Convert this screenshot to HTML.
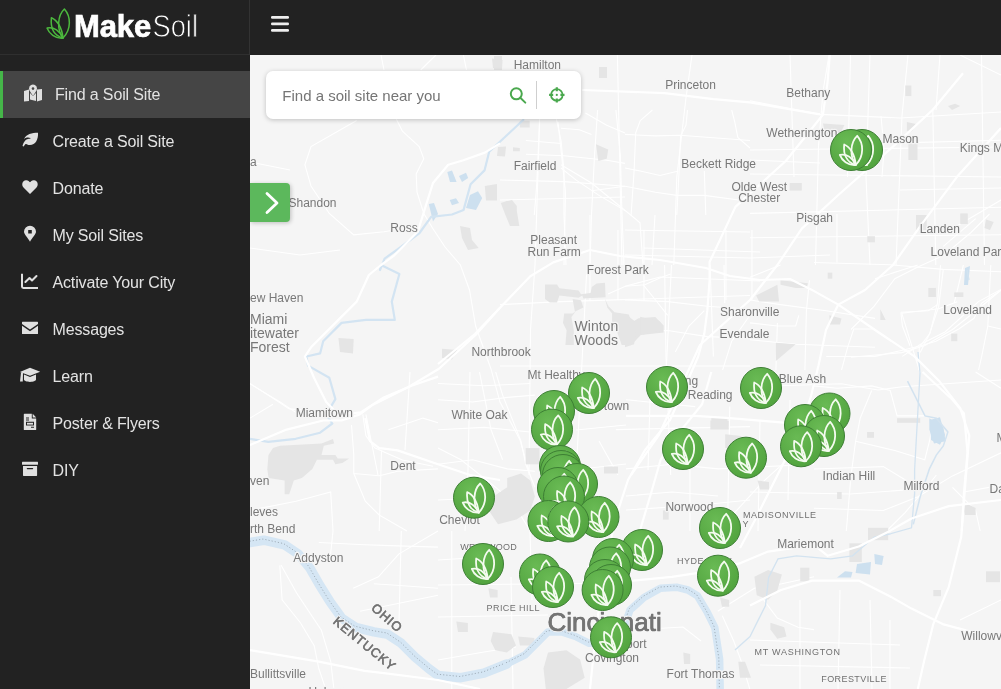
<!DOCTYPE html>
<html><head><meta charset="utf-8">
<style>
html,body{margin:0;padding:0}
body{width:1001px;height:689px;overflow:hidden;position:relative;background:#f5f5f5;font-family:"Liberation Sans",sans-serif}
svg{position:absolute;left:0;top:0;display:block;will-change:transform}
#search{position:absolute;left:266px;top:71px;width:315px;height:48px;background:#fff;border-radius:7px;box-shadow:0 1px 5px rgba(0,0,0,.22)}
#tog{position:absolute;left:250px;top:183px;width:40px;height:39px;background:#5cb85c;border-radius:0 4px 4px 0;box-shadow:1px 1px 4px rgba(0,0,0,.22)}
</style></head><body>
<svg width="1001" height="689" viewBox="0 0 1001 689">
<defs>
<g id="leafg" fill="none" stroke-linejoin="round">
<path d="M4,14.7 C-2.5,6 -1.5,-8 5.4,-14.4 C12,-7 12.5,6 4,14.7 Z"/>
<path d="M4,14.7 C-6,12 -8.5,3 -7.6,-5.7 C-2,-3.5 3,4 4,14.7 Z"/>
<path d="M4,14.7 C-4,15.5 -10,10 -12,4.7 C-5,3 1,8 4,14.7 Z"/>
</g>
<radialGradient id="mg" cx="40%" cy="30%" r="70%">
<stop offset="0" stop-color="#69ba54"/><stop offset="1" stop-color="#52a43f"/>
</radialGradient>
<g id="mk"><circle r="20.5" fill="url(#mg)" stroke="#3d7f34" stroke-width="1"/><use href="#leafg" x="0.8" y="0.2" stroke="#f4fbef" stroke-width="1.8"/></g>
</defs>
<rect x="250" y="55" width="751" height="634" fill="#f5f5f5"/>
<g id="roads"><polyline points="396.3,119.0 402.4,131.2 419.2,146.5 423.8,158.7 416.2,173.9 417.0,192.2 423.8,213.5 433.0,228.8 445.0,247.0 460.4,265.0 469.5,290.0 475.6,326.0 490.9,368.7 500.0,402.0 520.0,440.0 530.0,475.0" fill="none" stroke="#fff" stroke-width="1.1"/>
<polyline points="356.7,120.5 311.0,146.5 304.9,164.8 311.0,186.0 329.3,213.5 353.7,234.9 384.0,231.8 393.3,230.3" fill="none" stroke="#fff" stroke-width="1.1"/>
<polyline points="420.7,70.0 436.0,55.0" fill="none" stroke="#fff" stroke-width="1.1"/>
<polyline points="381.0,55.0 384.0,70.0" fill="none" stroke="#fff" stroke-width="1.1"/>
<polyline points="463.4,55.0 466.5,70.0" fill="none" stroke="#fff" stroke-width="1.1"/>
<polyline points="617.4,55.0 622.0,265.0" fill="none" stroke="#fff" stroke-width="1.1"/>
<polyline points="692.0,55.0 686.0,97.7 676.8,177.0 673.8,265.0" fill="none" stroke="#fff" stroke-width="1.1"/>
<polyline points="539.6,122.0 535.0,265.0 530.5,330.0 529.0,475.0" fill="none" stroke="#fff" stroke-width="1.1"/>
<polyline points="558.0,122.0 565.5,192.0 564.0,265.0" fill="none" stroke="#fff" stroke-width="1.1"/>
<polyline points="561.0,164.8 591.5,183.0 640.0,222.7 643.0,265.0" fill="none" stroke="#fff" stroke-width="1.1"/>
<polyline points="587.0,265.0 582.3,356.5 576.0,475.0" fill="none" stroke="#fff" stroke-width="1.1"/>
<polyline points="664.6,265.0 666.0,356.5 670.7,475.0" fill="none" stroke="#fff" stroke-width="1.1"/>
<polyline points="710.0,265.0 713.4,356.5" fill="none" stroke="#fff" stroke-width="1.1"/>
<polyline points="500.0,304.6 561.0,301.6 750.0,295.5" fill="none" stroke="#fff" stroke-width="1.1"/>
<polyline points="500.0,366.0 750.0,366.0" fill="none" stroke="#fff" stroke-width="1.1"/>
<polyline points="615.9,429.6 750.0,426.6" fill="none" stroke="#fff" stroke-width="1.1"/>
<polyline points="829.0,55.0 823.0,91.5 818.5,146.4 815.5,265.0" fill="none" stroke="#fff" stroke-width="1.1"/>
<polyline points="908.0,55.0 902.0,116.0 896.0,265.0" fill="none" stroke="#fff" stroke-width="1.1"/>
<polyline points="932.8,110.0 935.8,265.0" fill="none" stroke="#fff" stroke-width="1.1"/>
<polyline points="750.0,174.0 1001.0,177.0" fill="none" stroke="#fff" stroke-width="1.1"/>
<polyline points="750.0,100.7 820.0,114.4 900.0,118.0 1001.0,112.0" fill="none" stroke="#fff" stroke-width="1.1"/>
<polyline points="1001.0,289.4 978.4,301.6 945.0,332.0 920.6,344.2 902.3,356.4" fill="none" stroke="#fff" stroke-width="1.1"/>
<polyline points="750.0,386.8 841.4,383.8 878.0,390.0 902.3,386.8 1001.0,380.0" fill="none" stroke="#fff" stroke-width="1.1"/>
<polyline points="362.8,414.4 365.9,435.7 375.0,448.0 402.4,460.0 433.0,466.2" fill="none" stroke="#fff" stroke-width="1.1"/>
<polyline points="365.9,414.4 372.0,445.0 378.0,475.0" fill="none" stroke="#fff" stroke-width="1.1"/>
<polyline points="250.0,383.9 280.5,402.2 298.8,414.4" fill="none" stroke="#fff" stroke-width="1.1"/>
<polyline points="281.0,565.0 296.6,593.0 321.4,630.3 330.7,661.3 333.9,689.0" fill="none" stroke="#fff" stroke-width="1.1"/>
<polyline points="883.6,534.0 905.3,512.3 924.0,490.5 936.4,475.0" fill="none" stroke="#fff" stroke-width="1.1"/>
<polyline points="750.0,492.0 850.0,494.0 905.0,490.0" fill="none" stroke="#fff" stroke-width="1.1"/>
<polyline points="250.0,162.0 290.0,170.0" fill="none" stroke="#fff" stroke-width="1.1"/>
<polyline points="250.0,248.0 300.0,255.0 340.0,250.0" fill="none" stroke="#fff" stroke-width="1.1"/>
<polyline points="851.0,329.5 874.0,306.4 894.8,278.7 917.9,267.1 943.3,255.6 971.0,232.5 989.5,214.0" fill="none" stroke="#fff" stroke-width="1.1"/>
<polyline points="814.0,262.5 890.2,264.8 943.3,269.4 1001.0,271.7" fill="none" stroke="#fff" stroke-width="1.1"/>
<polyline points="901.8,313.3 911.0,343.3 920.2,373.0" fill="none" stroke="#fff" stroke-width="1.1"/>
<polyline points="901.8,313.3 938.7,308.7 957.2,301.8" fill="none" stroke="#fff" stroke-width="1.1"/>
<polyline points="943.3,269.4 938.7,306.4 929.5,334.1 920.2,352.6" fill="none" stroke="#fff" stroke-width="1.1"/>
<polyline points="1001.0,290.2 975.7,311.0 952.6,329.5 924.9,345.6 901.8,352.6 851.0,357.2" fill="none" stroke="#fff" stroke-width="1.1"/>
<polyline points="943.3,246.3 975.7,218.6" fill="none" stroke="#fff" stroke-width="1.1"/>
<polyline points="837.0,214.0 837.0,262.5" fill="none" stroke="#fff" stroke-width="1.1"/>
<polyline points="608.0,294.0 626.0,286.0 660.0,277.0 760.0,281.0" fill="none" stroke="#fff" stroke-width="1.1"/>
<polyline points="644.0,248.0 760.0,252.0" fill="none" stroke="#fff" stroke-width="1.1"/>
<polyline points="590.0,215.0 590.0,300.0" fill="none" stroke="#fff" stroke-width="1.1"/>
<polyline points="618.0,230.0 618.0,300.0" fill="none" stroke="#fff" stroke-width="1.1"/>
<polyline points="644.0,230.0 644.0,300.0" fill="none" stroke="#fff" stroke-width="1.1"/>
<polyline points="726.0,230.0 726.0,300.0" fill="none" stroke="#fff" stroke-width="1.1"/>
<polyline points="752.0,230.0 752.0,300.0" fill="none" stroke="#fff" stroke-width="1.1"/>
<polyline points="881.0,116.0 884.0,150.0 882.0,177.0" fill="none" stroke="#fff" stroke-width="1.1"/>
<polyline points="750.0,160.0 820.0,163.0" fill="none" stroke="#fff" stroke-width="1.1"/>
<polyline points="900.0,190.0 1001.0,188.0" fill="none" stroke="#fff" stroke-width="1.1"/>
<polyline points="950.0,230.0 1001.0,200.0" fill="none" stroke="#fff" stroke-width="1.1"/>
<polyline points="960.0,55.0 1001.0,75.0" fill="none" stroke="#fff" stroke-width="1.1"/>
<polyline points="790.0,55.0 794.0,177.0" fill="none" stroke="#fff" stroke-width="1.1"/>
<polyline points="750.0,258.0 830.0,255.0" fill="none" stroke="#fff" stroke-width="1.1"/>
<polyline points="866.0,177.0 870.0,265.0" fill="none" stroke="#fff" stroke-width="1.1"/>
<polyline points="495.7,372.0 502.6,395.1 511.8,418.1 521.0,441.2 525.7,464.3 534.9,487.3" fill="none" stroke="#fff" stroke-width="1.1"/>
<polyline points="438.0,399.7 472.6,402.0 507.2,397.4 534.9,395.1" fill="none" stroke="#fff" stroke-width="1.1"/>
<polyline points="438.0,429.7 484.1,427.4 530.3,432.0" fill="none" stroke="#fff" stroke-width="1.1"/>
<polyline points="438.0,464.3 472.6,459.7 507.2,468.9 534.9,471.2" fill="none" stroke="#fff" stroke-width="1.1"/>
<polyline points="438.0,448.1 461.0,459.7 495.7,487.3 511.8,501.2 530.3,531.0" fill="none" stroke="#fff" stroke-width="1.1"/>
<polyline points="479.5,372.0 484.1,395.1 491.0,429.7 502.6,459.7" fill="none" stroke="#fff" stroke-width="1.1"/>
<polyline points="438.0,383.5 484.1,385.8 530.3,383.5" fill="none" stroke="#fff" stroke-width="1.1"/>
<polyline points="576.0,430.0 626.0,425.0" fill="none" stroke="#fff" stroke-width="1.1"/>
<polyline points="581.0,469.0 626.0,464.0" fill="none" stroke="#fff" stroke-width="1.1"/>
<polyline points="599.0,441.0 618.0,475.0" fill="none" stroke="#fff" stroke-width="1.1"/>
<polyline points="500.0,200.0 625.0,197.0" fill="none" stroke="#fff" stroke-width="1.1"/>
<polyline points="564.0,215.0 566.0,265.0" fill="none" stroke="#fff" stroke-width="1.1"/>
<polyline points="591.5,215.0 590.0,265.0" fill="none" stroke="#fff" stroke-width="1.1"/>
<polyline points="622.0,215.0 624.0,265.0" fill="none" stroke="#fff" stroke-width="1.1"/>
<polyline points="625.0,230.0 750.0,232.0" fill="none" stroke="#fff" stroke-width="1.1"/>
<polyline points="625.0,255.0 750.0,258.0" fill="none" stroke="#fff" stroke-width="1.1"/>
<polyline points="655.0,215.0 652.0,265.0" fill="none" stroke="#fff" stroke-width="1.1"/>
<polyline points="750.0,150.0 1001.0,147.0" fill="none" stroke="#fff" stroke-width="1.1"/>
<polyline points="870.0,55.0 866.0,177.0" fill="none" stroke="#fff" stroke-width="1.1"/>
<polyline points="940.0,55.0 936.0,110.0" fill="none" stroke="#fff" stroke-width="1.1"/>
<polyline points="438.0,500.0 480.0,498.0 520.0,505.0" fill="none" stroke="#fff" stroke-width="1.1"/>
<polyline points="438.0,560.0 470.0,558.0 500.0,562.0" fill="none" stroke="#fff" stroke-width="1.1"/>
<polyline points="470.0,372.0 468.0,470.0 465.0,531.0" fill="none" stroke="#fff" stroke-width="1.1"/>
<polyline points="410.0,372.0 405.0,450.0" fill="none" stroke="#fff" stroke-width="1.1"/>
<polyline points="626.0,510.0 700.0,505.0 750.0,500.0" fill="none" stroke="#fff" stroke-width="1.1"/>
<polyline points="650.0,400.0 648.0,470.0" fill="none" stroke="#fff" stroke-width="1.1"/>
<polyline points="690.0,440.0 690.0,531.0" fill="none" stroke="#fff" stroke-width="1.1"/>
<polyline points="760.0,420.0 758.0,531.0" fill="none" stroke="#fff" stroke-width="1.1"/>
<polyline points="790.0,400.0 788.0,500.0" fill="none" stroke="#fff" stroke-width="1.1"/>
<polyline points="800.0,600.0 800.0,689.0" fill="none" stroke="#fff" stroke-width="1.1"/>
<polyline points="840.0,590.0 838.0,689.0" fill="none" stroke="#fff" stroke-width="1.1"/>
<polyline points="870.0,600.0 872.0,689.0" fill="none" stroke="#fff" stroke-width="1.1"/>
<polyline points="750.0,640.0 900.0,645.0" fill="none" stroke="#fff" stroke-width="1.1"/>
<polyline points="760.0,665.0 910.0,668.0" fill="none" stroke="#fff" stroke-width="1.1"/>
<polyline points="890.0,620.0 890.0,689.0" fill="none" stroke="#fff" stroke-width="1.1"/>
<polyline points="1001.0,600.0 960.0,620.0" fill="none" stroke="#fff" stroke-width="1.1"/>
<polyline points="250.0,383.5 275.4,399.7 289.2,408.9 351.5,413.5" fill="none" stroke="#fff" stroke-width="1.1"/>
<polyline points="250.0,418.1 273.0,404.3" fill="none" stroke="#fff" stroke-width="1.1"/>
<polyline points="351.5,425.0 353.8,455.0 353.8,473.5 379.2,475.8 397.6,471.2 438.0,468.9" fill="none" stroke="#fff" stroke-width="1.1"/>
<polyline points="381.5,450.4 379.2,531.0" fill="none" stroke="#fff" stroke-width="1.1"/>
<polyline points="353.8,473.5 365.3,501.2 379.2,515.0 406.9,531.0" fill="none" stroke="#fff" stroke-width="1.1"/>
<polyline points="388.4,429.7 423.0,418.1 438.0,422.7" fill="none" stroke="#fff" stroke-width="1.1"/>
<polyline points="250.0,510.4 296.1,501.2 330.7,492.0 333.0,531.0 330.0,560.0" fill="none" stroke="#fff" stroke-width="1.1"/>
<polyline points="279.8,565.4 282.1,599.8 300.4,622.7 314.2,645.6 318.8,668.5 325.7,689.0" fill="none" stroke="#fff" stroke-width="1.1"/>
<polyline points="353.2,588.3 378.4,576.8 399.0,553.9 438.0,531.0" fill="none" stroke="#fff" stroke-width="1.1"/>
<polyline points="318.8,542.5 364.6,544.8 438.0,547.1" fill="none" stroke="#fff" stroke-width="1.1"/>
<polyline points="401.3,531.0 399.0,622.7" fill="none" stroke="#fff" stroke-width="1.1"/>
<polyline points="360.0,611.2 438.0,595.2" fill="none" stroke="#fff" stroke-width="1.1"/>
<polyline points="373.8,583.7 438.0,588.3" fill="none" stroke="#fff" stroke-width="1.1"/>
<polyline points="438.0,585.0 626.0,583.0" fill="none" stroke="#fff" stroke-width="1.1"/>
<polyline points="438.0,617.0 548.0,615.0" fill="none" stroke="#fff" stroke-width="1.1"/>
<polyline points="451.8,531.0 451.8,689.0" fill="none" stroke="#fff" stroke-width="1.1"/>
<polyline points="511.0,577.0 513.0,689.0" fill="none" stroke="#fff" stroke-width="1.1"/>
<polyline points="530.0,531.0 532.0,600.0" fill="none" stroke="#fff" stroke-width="1.1"/>
<polyline points="438.0,660.0 484.0,652.0 516.0,647.0" fill="none" stroke="#fff" stroke-width="1.1"/>
<polyline points="717.7,611.2 736.0,599.8 754.4,588.3 781.9,583.7 814.0,576.8" fill="none" stroke="#fff" stroke-width="1.1"/>
<polyline points="722.3,615.8 733.7,641.0 740.6,659.4 749.8,689.0" fill="none" stroke="#fff" stroke-width="1.1"/>
<polyline points="763.6,599.8 777.3,618.1 798.0,627.3 814.0,629.6" fill="none" stroke="#fff" stroke-width="1.1"/>
<polyline points="649.0,629.0 683.0,627.0 701.0,641.0" fill="none" stroke="#fff" stroke-width="1.1"/>
<polyline points="814.0,385.9 837.1,388.2 871.7,385.9 890.2,390.5 897.1,415.9 924.8,415.9" fill="none" stroke="#fff" stroke-width="1.1"/>
<polyline points="871.7,390.5 860.2,418.2 855.6,441.3 851.0,475.9 846.3,531.0" fill="none" stroke="#fff" stroke-width="1.1"/>
<polyline points="855.6,441.3 894.8,450.5 924.8,459.7 929.4,441.3 934.0,418.2" fill="none" stroke="#fff" stroke-width="1.1"/>
<polyline points="814.0,508.2 883.3,510.5 917.9,496.7 952.5,475.9 1001.0,452.8" fill="none" stroke="#fff" stroke-width="1.1"/>
<polyline points="952.5,487.4 975.6,510.5 980.2,531.0" fill="none" stroke="#fff" stroke-width="1.1"/>
<polyline points="964.0,492.0 1001.0,485.1" fill="none" stroke="#fff" stroke-width="1.1"/>
<polyline points="814.0,469.0 883.3,466.6 906.3,480.5" fill="none" stroke="#fff" stroke-width="1.1"/>
<polyline points="975.6,372.0 1001.0,388.2" fill="none" stroke="#fff" stroke-width="1.1"/>
<polyline points="814.0,436.6 787.5,459.7 762.1,482.7 736.7,510.4 718.3,531.0" fill="none" stroke="#fff" stroke-width="1.1"/>
<polyline points="626.0,468.9 672.1,464.3 718.3,468.9 814.0,464.3" fill="none" stroke="#fff" stroke-width="1.1"/>
<polyline points="729.8,406.6 727.5,531.0" fill="none" stroke="#fff" stroke-width="1.1"/>
<polyline points="626.0,399.7 695.2,406.6" fill="none" stroke="#fff" stroke-width="1.1"/>
<polyline points="626.0,496.0 672.0,492.0 718.0,496.0" fill="none" stroke="#fff" stroke-width="1.1"/>
<polyline points="539.6,119.1 538.1,155.7 536.6,186.2 534.3,215.0" fill="none" stroke="#fff" stroke-width="1.1"/>
<polyline points="556.4,119.1 561.0,140.5 564.0,171.0 564.0,215.0" fill="none" stroke="#fff" stroke-width="1.1"/>
<polyline points="597.6,110.0 594.5,155.7 591.5,215.0" fill="none" stroke="#fff" stroke-width="1.1"/>
<polyline points="615.9,110.0 620.4,155.7 622.0,215.0" fill="none" stroke="#fff" stroke-width="1.1"/>
<polyline points="561.0,168.0 576.2,180.1 599.0,195.4 625.0,210.6" fill="none" stroke="#fff" stroke-width="1.1"/>
<polyline points="525.9,154.2 564.0,155.7 606.7,160.3 625.0,163.4" fill="none" stroke="#fff" stroke-width="1.1"/>
<polyline points="525.9,140.5 561.0,143.5" fill="none" stroke="#fff" stroke-width="1.1"/>
<polyline points="585.4,113.0 606.7,125.2 625.0,132.9" fill="none" stroke="#fff" stroke-width="1.1"/>
<polyline points="500.0,180.0 564.0,181.6 625.0,186.2" fill="none" stroke="#fff" stroke-width="1.1"/>
<polyline points="561.0,128.3 579.3,129.8 591.5,134.4" fill="none" stroke="#fff" stroke-width="1.1"/>
<polyline points="591.5,190.8 625.0,186.2" fill="none" stroke="#fff" stroke-width="1.1"/>
<polyline points="687.5,110.0 686.0,125.2 680.6,135.9 679.1,171.0 676.8,215.0" fill="none" stroke="#fff" stroke-width="1.1"/>
<polyline points="652.4,110.0 640.2,120.7 635.7,132.9 634.1,171.0 631.1,215.0" fill="none" stroke="#fff" stroke-width="1.1"/>
<polyline points="625.0,134.4 655.5,135.9 679.9,135.2 750.0,140.5" fill="none" stroke="#fff" stroke-width="1.1"/>
<polyline points="625.0,168.0 640.2,171.0 660.0,175.5 678.4,171.0" fill="none" stroke="#fff" stroke-width="1.1"/>
<polyline points="625.0,186.2 655.5,192.3 676.8,195.4 704.3,195.4 750.0,201.5" fill="none" stroke="#fff" stroke-width="1.1"/>
<polyline points="731.7,110.0 734.8,122.2 737.8,137.4 750.0,148.0" fill="none" stroke="#fff" stroke-width="1.1"/>
<polyline points="704.3,171.0 705.8,215.0" fill="none" stroke="#fff" stroke-width="1.1"/>
<polyline points="850.5,55.0 847.5,177.0" fill="none" stroke="#fff" stroke-width="1.1"/>
<polyline points="750.0,213.4 1001.0,207.3" fill="none" stroke="#fff" stroke-width="1.1"/>
<polyline points="881.0,143.3 1001.0,140.3" fill="none" stroke="#fff" stroke-width="1.1"/>
<polyline points="981.5,55.0 984.5,265.0" fill="none" stroke="#fff" stroke-width="1.1"/>
<polyline points="750.0,237.8 1001.0,234.7" fill="none" stroke="#fff" stroke-width="1.1"/>
<polyline points="671.5,265.0 669.2,310.7 666.2,370.0" fill="none" stroke="#fff" stroke-width="1.1"/>
<polyline points="643.3,284.8 655.5,300.0 667.7,315.3" fill="none" stroke="#fff" stroke-width="1.1"/>
<polyline points="625.0,300.0 667.7,301.6 707.3,306.2 750.0,309.2" fill="none" stroke="#fff" stroke-width="1.1"/>
<polyline points="625.0,332.0 667.7,330.5 707.3,336.6 750.0,338.2" fill="none" stroke="#fff" stroke-width="1.1"/>
<polyline points="675.3,351.9 689.0,326.0 704.3,310.7" fill="none" stroke="#fff" stroke-width="1.1"/>
<polyline points="724.0,265.0 724.8,303.0" fill="none" stroke="#fff" stroke-width="1.1"/>
<polyline points="625.0,286.3 644.8,284.8 661.6,277.2 670.7,274.1" fill="none" stroke="#fff" stroke-width="1.1"/>
<polyline points="750.0,315.3 731.7,341.2 722.6,370.0" fill="none" stroke="#fff" stroke-width="1.1"/>
<polyline points="809.5,280.2 806.4,310.7 804.9,370.0" fill="none" stroke="#fff" stroke-width="1.1"/>
<polyline points="750.0,300.0 780.5,304.6 826.2,310.7 875.0,318.4" fill="none" stroke="#fff" stroke-width="1.1"/>
<polyline points="798.8,315.3 795.7,326.0 777.4,326.0 750.0,322.9" fill="none" stroke="#fff" stroke-width="1.1"/>
<polyline points="750.0,339.7 795.7,344.3 875.0,347.3" fill="none" stroke="#fff" stroke-width="1.1"/>
<polyline points="875.0,329.0 853.7,329.0 847.6,347.3 841.5,370.0" fill="none" stroke="#fff" stroke-width="1.1"/>
<polyline points="777.4,322.9 775.9,370.0" fill="none" stroke="#fff" stroke-width="1.1"/>
<polyline points="875.0,356.5 826.2,356.5" fill="none" stroke="#fff" stroke-width="1.1"/>
<polyline points="750.0,277.2 780.5,265.0" fill="none" stroke="#fff" stroke-width="1.1"/>
<polyline points="1000.0,290.9 981.7,303.1 974.0,318.3 958.8,329.0 936.0,341.2 920.7,345.8 902.4,350.3 875.0,356.4" fill="none" stroke="#fff" stroke-width="1.1"/>
<polyline points="940.5,265.0 937.5,303.1 929.9,333.6 919.2,347.3 919.2,370.0" fill="none" stroke="#fff" stroke-width="1.1"/>
<polyline points="963.4,265.0 954.2,303.1" fill="none" stroke="#fff" stroke-width="1.1"/>
<polyline points="900.9,312.2 928.3,310.7 937.5,304.6" fill="none" stroke="#fff" stroke-width="1.1"/>
<polyline points="900.9,312.2 902.4,326.0 910.0,345.8" fill="none" stroke="#fff" stroke-width="1.1"/>
<polyline points="875.0,278.7 917.7,265.0" fill="none" stroke="#fff" stroke-width="1.1"/>
<polyline points="987.8,326.0 1001.0,329.0" fill="none" stroke="#fff" stroke-width="1.1"/>
<polyline points="990.8,265.0 987.8,326.0 981.7,356.4 978.6,370.0" fill="none" stroke="#fff" stroke-width="1.1"/>
<polygon points="460.0,226.0 470.0,228.0 472.0,240.0 478.7,248.0 468.0,250.0 462.0,238.0" fill="#e5e5e5"/>
<polygon points="484.8,186.0 497.0,184.0 497.0,200.6 486.0,200.6" fill="#e5e5e5"/>
<polygon points="498.0,147.0 506.0,146.5 505.0,156.5 497.0,156.0" fill="#e5e5e5"/>
<polygon points="500.8,203.0 507.0,201.0 513.0,205.0 517.0,212.0 519.3,226.1 510.0,226.0 505.0,214.0" fill="#e5e5e5"/>
<polygon points="494.0,58.0 502.0,58.0 502.0,68.7 494.0,68.7" fill="#e5e5e5"/>
<polygon points="492.0,58.5 502.6,60.0 502.0,68.8 493.0,68.0" fill="#e5e5e5"/>
<polygon points="338.4,338.0 353.7,339.0 353.0,353.4 340.0,352.0" fill="#e5e5e5"/>
<polygon points="442.0,348.8 457.3,350.0 452.0,359.5 442.0,358.0" fill="#e5e5e5"/>
<polygon points="710.4,420.5 728.7,421.0 728.7,429.6 710.4,429.6" fill="#e5e5e5"/>
<polygon points="868.0,527.8 888.2,527.8 888.2,540.2 868.0,540.2" fill="#e5e5e5"/>
<polygon points="849.4,543.3 861.8,543.3 861.8,562.0 849.4,562.0" fill="#e5e5e5"/>
<polygon points="986.0,571.3 1000.0,571.3 1000.0,582.2 986.0,582.2" fill="#e5e5e5"/>
<polygon points="933.3,590.0 941.0,590.0 941.0,596.2 933.3,596.2" fill="#e5e5e5"/>
<polygon points="905.3,85.5 911.4,85.5 911.4,96.1 905.3,96.1" fill="#e5e5e5"/>
<polygon points="906.9,122.0 916.0,124.0 912.0,131.2 906.9,131.2" fill="#e5e5e5"/>
<polygon points="908.4,143.3 917.5,143.3 917.5,160.0 908.4,160.0" fill="#e5e5e5"/>
<polygon points="948.0,106.0 955.0,103.7 960.2,106.0 952.0,110.0" fill="#e5e5e5"/>
<polygon points="789.6,183.0 801.8,183.0 801.8,190.6 789.6,190.6" fill="#e5e5e5"/>
<polygon points="867.3,236.2 874.9,236.2 874.9,242.3 867.3,242.3" fill="#e5e5e5"/>
<polygon points="916.0,215.0 926.7,215.0 926.7,230.1 916.0,230.1" fill="#e5e5e5"/>
<polygon points="960.2,213.4 967.8,213.4 967.8,224.0 960.2,224.0" fill="#e5e5e5"/>
<polygon points="986.0,219.5 993.7,222.0 990.0,230.1 984.5,228.0" fill="#e5e5e5"/>
<polygon points="823.0,123.5 844.4,125.0 840.0,134.2 825.0,134.2" fill="#e5e5e5"/>
<polygon points="494.0,56.0 502.0,56.0 502.0,70.0 494.0,70.0" fill="#e5e5e5"/>
<polygon points="599.0,67.0 607.0,67.0 607.0,78.0 599.0,78.0" fill="#e5e5e5"/>
<polygon points="507.2,478.1 521.0,473.5 530.3,480.4 534.9,496.6 530.3,510.4 516.4,519.6 498.0,524.3 488.8,510.4 493.4,496.6 507.2,487.3" fill="#e5e5e5"/>
<polygon points="525.7,448.1 539.5,448.1 539.5,464.3 525.7,464.3" fill="#e5e5e5"/>
<polygon points="604.0,466.6 618.0,466.6 618.0,473.5 604.0,473.5" fill="#e5e5e5"/>
<polygon points="273.0,448.1 280.0,445.8 321.5,443.5 333.0,438.9 334.2,443.5 323.8,445.8 321.5,455.0 335.4,455.0 337.7,458.5 349.2,458.5 342.3,463.1 335.4,464.3 333.0,459.7 316.9,459.7 312.3,468.9 301.9,478.1 293.8,480.4 289.2,494.3 284.6,494.3 284.6,480.4 268.5,478.1 267.3,468.9 268.5,455.0" fill="#e5e5e5"/>
<polygon points="493.0,631.9 511.4,634.2 516.0,645.6 506.8,652.5 495.3,650.2 490.7,641.0" fill="#e5e5e5"/>
<polygon points="518.2,636.5 534.3,638.0 534.3,645.6 520.0,645.6" fill="#e5e5e5"/>
<polygon points="548.0,652.5 566.4,650.2 580.1,659.4 584.7,677.7 566.4,689.0 545.8,689.0 543.5,668.6" fill="#e5e5e5"/>
<polygon points="456.3,621.6 467.8,623.0 467.8,631.9 458.0,631.9" fill="#e5e5e5"/>
<polygon points="488.4,588.3 497.6,590.0 497.6,597.5 490.0,597.5" fill="#e5e5e5"/>
<polygon points="754.4,576.8 768.1,570.0 781.9,574.6 777.3,590.6 768.1,599.8 756.7,595.2" fill="#e5e5e5"/>
<polygon points="800.2,567.7 809.4,567.7 809.4,581.4 800.2,581.4" fill="#e5e5e5"/>
<polygon points="770.4,622.7 784.2,627.3 786.5,636.5 777.3,638.8 770.4,629.6" fill="#e5e5e5"/>
<polygon points="738.3,661.7 745.0,661.7 751.0,677.7 740.0,677.7" fill="#e5e5e5"/>
<polygon points="720.0,597.5 729.2,600.0 729.2,606.7 722.0,606.7" fill="#e5e5e5"/>
<polygon points="683.3,652.5 690.2,654.0 690.2,664.0 684.0,664.0" fill="#e5e5e5"/>
<polygon points="897.1,418.2 920.2,418.2 920.2,422.8 897.1,422.8" fill="#e5e5e5"/>
<polygon points="867.1,432.0 874.0,432.0 874.0,437.8 867.1,437.8" fill="#e5e5e5"/>
<polygon points="837.1,492.0 841.7,492.0 841.7,499.0 837.1,499.0" fill="#e5e5e5"/>
<polygon points="961.7,501.3 975.6,508.0 975.6,515.1 965.0,515.1" fill="#e5e5e5"/>
<polygon points="711.3,418.1 727.5,418.1 727.5,427.4 711.3,427.4" fill="#e5e5e5"/>
<polygon points="725.2,434.3 741.3,436.0 741.3,448.1 725.2,448.1" fill="#e5e5e5"/>
<polygon points="757.5,480.4 769.0,482.0 769.0,489.6 760.0,489.6" fill="#e5e5e5"/>
<polygon points="662.9,510.4 668.7,510.4 668.7,519.6 662.9,519.6" fill="#e5e5e5"/>
<polygon points="596.0,144.3 608.2,149.6 606.7,158.8 598.3,161.0" fill="#e5e5e5"/>
<polygon points="513.0,147.3 519.8,148.0 519.8,151.2 513.0,151.2" fill="#e5e5e5"/>
<polygon points="519.8,120.7 529.7,120.7 529.7,127.5 519.8,127.5" fill="#e5e5e5"/>
<polygon points="506.0,201.5 512.0,200.0 516.8,206.0 516.8,215.0 506.0,215.0" fill="#e5e5e5"/>
<polygon points="545.0,284.6 557.0,284.6 559.4,288.2 578.6,290.6 581.0,294.2 590.6,293.0 591.8,287.0 596.6,283.4 605.0,282.8 605.6,297.2 583.4,298.4 582.2,295.4 578.6,297.8 559.4,295.4 557.0,302.6 549.8,302.6 545.0,299.0" fill="#e5e5e5"/>
<polygon points="572.6,299.0 581.0,300.2 583.4,307.4 576.2,311.0 572.6,313.4 564.2,313.4 563.0,323.0 566.6,330.2 565.4,345.0 573.8,345.0 573.8,330.2 571.4,317.0 575.0,312.2" fill="#e5e5e5"/>
<polygon points="605.0,299.0 608.5,306.2 614.5,312.2 628.9,314.6 631.3,323.0 638.5,318.2 655.3,317.0 663.7,325.4 663.7,332.6 640.9,335.0 631.3,345.0 621.7,345.0 616.9,331.4 612.1,323.0 612.1,313.4 607.3,307.4" fill="#e5e5e5"/>
<polygon points="640.2,316.8 660.0,321.4 663.0,330.5 640.2,335.1" fill="#e5e5e5"/>
<polygon points="625.0,313.8 637.2,322.9 634.1,344.3 625.0,347.3" fill="#e5e5e5"/>
<polygon points="756.1,295.5 777.4,284.8 779.0,301.6 759.1,301.6" fill="#e5e5e5"/>
<polygon points="780.5,280.2 807.9,283.3 806.4,287.9 795.7,287.9 780.5,284.8" fill="#e5e5e5"/>
<polygon points="829.3,315.3 841.5,318.4 840.0,324.5 830.0,324.5" fill="#e5e5e5"/>
<polygon points="775.9,342.7 795.7,344.3 775.9,361.0" fill="#e5e5e5"/>
<polygon points="827.7,272.6 832.3,272.6 832.3,278.7 827.7,278.7" fill="#e5e5e5"/>
<polygon points="928.3,287.9 935.9,287.9 935.9,297.0 928.3,297.0" fill="#e5e5e5"/>
<polygon points="954.2,292.4 963.4,292.4 963.4,297.0 954.2,297.0" fill="#e5e5e5"/>
<polygon points="880.3,309.2 885.7,319.9 880.3,319.9" fill="#e5e5e5"/>
<polygon points="951.2,333.6 957.3,333.6 957.3,341.2 951.2,341.2" fill="#e5e5e5"/>
<polygon points="965.0,268.0 970.0,266.0 968.0,285.0 964.0,285.0" fill="#cde0ef"/>
<polygon points="874.3,554.0 883.6,556.0 882.0,565.0 875.0,564.0" fill="#cde0ef"/>
<polygon points="857.0,564.0 871.0,562.0 870.0,574.4 855.6,573.0" fill="#cde0ef"/>
<polygon points="837.0,577.5 845.0,571.3 852.5,572.0 851.0,577.5" fill="#cde0ef"/>
<polygon points="929.7,420.0 940.0,417.3 945.0,435.0 940.0,444.7 931.0,440.0" fill="#cde0ef"/>
<polygon points="447.3,172.0 452.0,170.4 456.6,182.0 450.0,182.0" fill="#cde0ef"/>
<polygon points="459.0,176.0 466.0,172.7 468.2,178.0 462.0,182.0" fill="#cde0ef"/>
<polygon points="470.0,195.0 478.0,191.3 482.2,198.0 476.0,209.9 466.0,208.0" fill="#cde0ef"/>
<polygon points="428.8,204.0 434.0,202.9 438.0,214.0 433.0,221.5" fill="#cde0ef"/>
<polygon points="449.7,200.0 456.0,198.2 459.0,203.0 452.0,205.2" fill="#cde0ef"/>
<polygon points="929.4,418.2 943.3,427.4 945.6,441.3 934.0,443.6 929.4,429.7" fill="#cde0ef"/>
<polyline points="524.0,119.3 489.2,151.8 484.5,170.4 470.6,184.3 463.6,209.9 452.0,214.5 431.1,216.8 419.5,233.0 400.9,247.0 384.6,258.6 380.0,270.0 381.0,265.0 399.4,274.0 391.8,301.6 394.8,319.9 365.9,319.9 341.5,322.9 323.2,341.2 320.1,353.4 306.4,356.5 308.0,365.6 329.3,377.8 335.4,399.1 326.2,414.4 332.3,423.5 320.1,432.7 295.7,438.8 268.3,441.8 250.0,438.8" fill="none" stroke="#d3e4f2" stroke-width="2.2" stroke-linejoin="round"/>
<polyline points="967.0,270.0 969.0,280.0" fill="none" stroke="#d3e3f0" stroke-width="1.3"/>
<polyline points="918.0,352.0 920.0,373.0 914.6,470.0 914.6,493.6 911.5,527.8 889.8,534.0 874.3,537.1 852.5,555.8 830.8,558.9 796.6,555.8 778.0,558.9 768.6,577.5 765.5,605.5 756.2,624.1 750.0,636.5 735.0,650.0" fill="none" stroke="#d3e3f0" stroke-width="1.3"/>
<polyline points="907.5,381.2 925.0,415.9 936.3,418.2 947.9,432.0 943.3,445.9 936.3,455.1 929.4,468.9 920.2,496.7 913.3,524.4" fill="none" stroke="#d3e3f0" stroke-width="1.5"/>
<polyline points="244.0,543.0 250.0,542.5 263.8,540.2 284.4,544.8 298.1,553.9 309.6,567.7 318.8,583.7 330.2,602.1 341.7,618.1 355.5,627.3 373.8,631.9 387.6,634.2 401.3,643.3 415.1,657.1 428.8,668.6 438.0,675.4 460.9,677.7 483.9,673.1 506.8,664.0" fill="none" stroke="#d5e6f4" stroke-width="9.5" stroke-linejoin="round" stroke-linecap="round"/>
<polyline points="244.0,543.0 250.0,542.5 263.8,540.2 284.4,544.8 298.1,553.9 309.6,567.7 318.8,583.7 330.2,602.1 341.7,618.1 355.5,627.3 373.8,631.9 387.6,634.2 401.3,643.3 415.1,657.1 428.8,668.6 438.0,675.4 460.9,677.7 483.9,673.1 506.8,664.0" fill="none" stroke="#7d8a94" stroke-width="0.6" stroke-dasharray="1.2,2" transform="translate(-0.8,-1.2)"/>
<polyline points="506.8,664.0 525.1,654.8 536.6,643.3 548.0,631.9 561.8,631.9 575.5,636.5 589.3,643.3 610.0,640.0 621.0,636.0 630.0,610.0 644.0,597.5 660.4,588.3 676.4,587.2 688.0,590.0 697.4,595.8 706.9,611.6 714.8,627.5 717.2,643.3 719.6,659.1 720.3,695.0" fill="none" stroke="#d5e6f4" stroke-width="7.5" stroke-linejoin="round" stroke-linecap="round"/>
<polyline points="506.8,664.0 525.1,654.8 536.6,643.3 548.0,631.9 561.8,631.9 575.5,636.5 589.3,643.3 610.0,640.0 621.0,636.0 630.0,610.0 644.0,597.5 660.4,588.3 676.4,587.2 688.0,590.0 697.4,595.8 706.9,611.6 714.8,627.5 717.2,643.3 719.6,659.1 720.3,695.0" fill="none" stroke="#7d8a94" stroke-width="0.6" stroke-dasharray="1.2,2" transform="translate(-0.8,-1.2)"/>
<polyline points="500.0,143.4 484.8,152.6 463.4,160.2 448.2,164.8 433.0,183.0 425.3,207.4 417.7,231.8 393.3,256.2 381.0,265.0 368.9,275.0 356.7,301.6 338.4,319.9 311.0,347.3 304.9,356.5 314.0,377.8 326.2,402.0 338.4,414.4" fill="none" stroke="#fff" stroke-width="2.2" stroke-linejoin="round"/>
<polyline points="500.0,307.7 475.6,335.0 439.0,368.7 408.5,387.0 372.0,405.3 359.8,414.4 341.5,420.5 323.2,420.5 286.6,429.6 250.0,444.9" fill="none" stroke="#fff" stroke-width="2.2" stroke-linejoin="round"/>
<polyline points="438.0,364.0 474.9,334.0 500.0,307.7 530.3,276.3 553.3,262.4 590.0,250.0 620.0,256.0 660.0,260.0 705.9,268.0 729.8,276.0 760.0,280.0 790.0,279.0 811.0,289.4 838.3,304.6 878.0,332.0 914.5,356.4 938.9,380.7 960.2,408.2 969.3,435.6 966.0,475.0 961.2,537.1 948.8,586.8 933.3,624.1 924.0,661.4 917.8,689.0" fill="none" stroke="#fff" stroke-width="2.2" stroke-linejoin="round"/>
<polyline points="1001.0,128.0 957.0,176.8 920.6,225.6 893.0,265.0 865.0,290.0 838.3,304.6 826.0,330.0 818.5,365.5 811.0,396.0 800.0,430.0 780.0,470.0 755.0,520.0 740.0,548.0" fill="none" stroke="#fff" stroke-width="2.2" stroke-linejoin="round"/>
<polyline points="829.8,55.0 827.5,82.6 822.9,114.8 786.0,160.8 735.4,206.9 709.6,262.0 709.6,280.2 707.3,310.7 704.3,333.6 698.2,356.5 688.0,380.0 670.0,420.0 645.0,450.0 628.0,480.0 615.0,520.0 607.0,560.0 600.0,600.0 595.0,640.0 590.0,689.0" fill="none" stroke="#fff" stroke-width="2.2" stroke-linejoin="round"/>
<polyline points="750.0,605.5 781.0,590.0 812.1,580.6 858.7,580.6 889.8,596.2 911.5,608.6 942.6,624.1 1001.0,639.6" fill="none" stroke="#fff" stroke-width="2.2" stroke-linejoin="round"/>
<polyline points="963.0,73.3 932.8,109.8 893.2,146.4 865.7,170.7 838.3,195.0 801.8,228.6 777.4,265.0 750.0,300.0 700.0,345.0 658.5,435.7 631.0,475.0" fill="none" stroke="#fff" stroke-width="2.2" stroke-linejoin="round"/>
<polyline points="582.3,90.0 664.6,93.1 713.4,99.2 750.0,102.3 820.0,114.4" fill="none" stroke="#fff" stroke-width="2.2" stroke-linejoin="round"/>
<polyline points="814.0,544.8 827.7,555.8 858.7,546.5 889.8,530.9 911.5,518.5 948.8,506.1 1001.0,500.0" fill="none" stroke="#fff" stroke-width="2.2" stroke-linejoin="round"/>
<polyline points="438.0,376.6 411.5,385.8 383.8,397.4 360.7,412.4 351.5,413.5" fill="none" stroke="#fff" stroke-width="2.2" stroke-linejoin="round"/>
<polyline points="365.3,418.1 370.0,441.2 379.2,448.1 397.6,450.4 438.0,464.3 470.0,475.0 500.0,480.0" fill="none" stroke="#fff" stroke-width="2.2" stroke-linejoin="round"/>
<polyline points="250.0,650.2 318.8,661.7 364.6,670.8 438.0,680.0 480.0,689.0" fill="none" stroke="#fff" stroke-width="2.2" stroke-linejoin="round"/>
<polyline points="922.5,372.0 952.5,399.7 964.0,413.5 967.5,452.8 964.0,492.0 961.7,531.0" fill="none" stroke="#fff" stroke-width="2.2" stroke-linejoin="round"/>
<polyline points="711.3,372.0 702.1,404.3 681.4,429.7 660.6,459.7 651.4,492.0 639.8,531.0" fill="none" stroke="#fff" stroke-width="2.2" stroke-linejoin="round"/>
<polyline points="626.0,415.8 695.2,415.8 729.8,418.1 814.0,425.1" fill="none" stroke="#fff" stroke-width="2.2" stroke-linejoin="round"/>
<polyline points="626.0,581.4 671.9,576.8 701.6,572.3 740.6,563.1 768.1,551.6 814.0,544.8" fill="none" stroke="#fff" stroke-width="2.2" stroke-linejoin="round"/></g>
<g id="labels" font-family="Liberation Sans" fill="#787878" stroke="#f5f5f5" stroke-width="2.5" stroke-linejoin="round" paint-order="stroke">
<text x="513.7" y="69.3" font-size="12">Hamilton</text>
<text x="250" y="166.0" font-size="12">a</text>
<text x="665.2" y="89.4" font-size="12">Princeton</text>
<text x="786.3" y="96.5" font-size="12">Bethany</text>
<text x="766.3" y="136.7" font-size="12">Wetherington</text>
<text x="882.5" y="142.7" font-size="12">Mason</text>
<text x="959.8" y="151.9" font-size="12">Kings Mills</text>
<text x="513.7" y="170.1" font-size="12">Fairfield</text>
<text x="681.3" y="167.5" font-size="12">Beckett Ridge</text>
<text x="731.4" y="190.8" font-size="12">Olde West</text>
<text x="738.2" y="202.0" font-size="12">Chester</text>
<text x="288.5" y="206.5" font-size="12">Shandon</text>
<text x="796.3" y="221.7" font-size="12">Pisgah</text>
<text x="390.3" y="232.3" font-size="12">Ross</text>
<text x="919.8" y="233.0" font-size="12">Landen</text>
<text x="530.3" y="244.0" font-size="12">Pleasant</text>
<text x="527.5" y="256.0" font-size="12">Run Farm</text>
<text x="930.6" y="256.1" font-size="12">Loveland Park</text>
<text x="586.8" y="274.0" font-size="12">Forest Park</text>
<text x="250" y="301.5" font-size="12">ew Haven</text>
<text x="943.3" y="313.8" font-size="12">Loveland</text>
<text x="720" y="316.0" font-size="12">Sharonville</text>
<text x="250" y="324.1" font-size="14">Miami</text>
<text x="574.6" y="331.0" font-size="14">Winton</text>
<text x="250" y="337.9" font-size="14">itewater</text>
<text x="719.4" y="337.9" font-size="12">Evendale</text>
<text x="574.6" y="344.8" font-size="14">Woods</text>
<text x="250" y="351.8" font-size="14">Forest</text>
<text x="471.4" y="355.7" font-size="12">Northbrook</text>
<text x="527.5" y="379.3" font-size="12">Mt Healthy</text>
<text x="778.7" y="382.7" font-size="12">Blue Ash</text>
<text x="684.8" y="385.0" font-size="12">ng</text>
<text x="687.8" y="398.9" font-size="12">Reading</text>
<text x="603.8" y="410.0" font-size="12">town</text>
<text x="295.7" y="417.3" font-size="12">Miamitown</text>
<text x="451.4" y="419.2" font-size="12">White Oak</text>
<text x="996.4" y="442.3" font-size="12">M</text>
<text x="390.3" y="470.4" font-size="12">Dent</text>
<text x="822.6" y="480.3" font-size="12">Indian Hill</text>
<text x="250" y="485.2" font-size="12">ven</text>
<text x="903.4" y="490.4" font-size="12">Milford</text>
<text x="989.5" y="492.9" font-size="12">Da</text>
<text x="665.4" y="510.5" font-size="12">Norwood</text>
<text x="250" y="516.4" font-size="12">leves</text>
<text x="439.2" y="523.5" font-size="12">Cheviot</text>
<text x="250" y="533.0" font-size="12">rth Bend</text>
<text x="777.2" y="547.5" font-size="12">Mariemont</text>
<text x="293.3" y="562.1" font-size="12">Addyston</text>
<text x="961.3" y="640.1" font-size="12">Willowville</text>
<text x="626" y="647.5" font-size="12">port</text>
<text x="585" y="662.4" font-size="12">Covington</text>
<text x="666.6" y="678.4" font-size="12">Fort Thomas</text>
<text x="250" y="678.4" font-size="12">Bullittsville</text>
<text x="308.5" y="696.0" font-size="12">Hebron</text>
<text x="460.3" y="550.2" font-size="9" letter-spacing="0.2" fill="#707070" stroke-width="1.8">WESTWOOD</text>
<text x="742.9" y="517.7" font-size="9" letter-spacing="0.6" fill="#707070" stroke-width="1.8">MADISONVILLE</text>
<text x="742.5" y="527" font-size="9" letter-spacing="0.5" fill="#707070" stroke-width="1.8">Y</text>
<text x="677" y="563.8" font-size="9" letter-spacing="0.5" fill="#707070" stroke-width="1.8">HYDE PARK</text>
<text x="486.6" y="611" font-size="9" letter-spacing="0.42" fill="#707070" stroke-width="1.8">PRICE HILL</text>
<text x="754.5" y="655.1" font-size="9" letter-spacing="0.73" fill="#707070" stroke-width="1.8">MT WASHINGTON</text>
<text x="821.3" y="682.2" font-size="9" letter-spacing="0.41" fill="#707070" stroke-width="1.8">FORESTVILLE</text>
<text x="547.5" y="631" font-size="26" fill="#747474">Cincinnati</text>
<text x="547.5" y="631" font-size="26" fill="#747474" stroke="#747474" stroke-width="0.7" paint-order="normal">Cincinnati</text>
<text x="0" y="0" font-size="12.8" letter-spacing="0.9" fill="#747474" stroke-width="2.2" transform="translate(386.4,618.7) rotate(41)" text-anchor="middle" dominant-baseline="middle">OHIO</text>
<text x="0" y="0" font-size="12.8" letter-spacing="0.9" fill="#747474" stroke-width="2.2" transform="translate(364,644.5) rotate(39.5)" text-anchor="middle" dominant-baseline="middle">KENTUCKY</text>
<text x="0" y="0" font-size="12.8" letter-spacing="0.9" fill="#747474" stroke="#747474" stroke-width="0.5" paint-order="normal" transform="translate(386.4,618.7) rotate(41)" text-anchor="middle" dominant-baseline="middle">OHIO</text>
<text x="0" y="0" font-size="12.8" letter-spacing="0.9" fill="#747474" stroke="#747474" stroke-width="0.5" paint-order="normal" transform="translate(364,644.5) rotate(39.5)" text-anchor="middle" dominant-baseline="middle">KENTUCKY</text>
</g>
<g id="markers"><use href="#mk" x="862" y="150"/>
<use href="#mk" x="851" y="150"/>
<use href="#mk" x="667" y="387"/>
<use href="#mk" x="761" y="388"/>
<use href="#mk" x="589" y="393"/>
<use href="#mk" x="554" y="411"/>
<use href="#mk" x="829.5" y="413.5"/>
<use href="#mk" x="805" y="425"/>
<use href="#mk" x="552" y="429.6"/>
<use href="#mk" x="824" y="436"/>
<use href="#mk" x="801" y="446.3"/>
<use href="#mk" x="683" y="449"/>
<use href="#mk" x="746" y="457.7"/>
<use href="#mk" x="560" y="466"/>
<use href="#mk" x="561" y="471"/>
<use href="#mk" x="563" y="475"/>
<use href="#mk" x="577" y="484"/>
<use href="#mk" x="558" y="488"/>
<use href="#mk" x="564" y="496.5"/>
<use href="#mk" x="474" y="497.7"/>
<use href="#mk" x="598.5" y="517"/>
<use href="#mk" x="548.5" y="521"/>
<use href="#mk" x="568.3" y="521.5"/>
<use href="#mk" x="720" y="528"/>
<use href="#mk" x="642" y="550"/>
<use href="#mk" x="613" y="559"/>
<use href="#mk" x="483" y="564"/>
<use href="#mk" x="610" y="567.5"/>
<use href="#mk" x="540" y="574.5"/>
<use href="#mk" x="718" y="575.7"/>
<use href="#mk" x="605" y="580"/>
<use href="#mk" x="611" y="585"/>
<use href="#mk" x="553" y="587"/>
<use href="#mk" x="602.6" y="590"/>
<use href="#mk" x="611" y="637.3"/></g>
</svg>
<div id="search"></div>
<div id="tog"></div>
<svg width="1001" height="689" viewBox="0 0 1001 689">
<!-- top bar + sidebar -->
<rect x="250" y="0" width="751" height="55" fill="#222"/>
<rect x="0" y="0" width="250" height="689" fill="#222"/>
<rect x="0" y="54" width="249" height="1" fill="#2f2f2f"/>
<rect x="249" y="0" width="1" height="55" fill="#333"/>
<g fill="#eee"><rect x="271" y="16" width="18" height="2.8" rx="1.2"/><rect x="271" y="22.5" width="18" height="2.8" rx="1.2"/><rect x="271" y="29" width="18" height="2.8" rx="1.2"/></g>
<!-- logo -->
<use href="#leafg" x="59" y="23.4" stroke="#4cb83e" stroke-width="1.5"/>
<text x="74" y="36.5" font-family="Liberation Sans" font-weight="bold" font-size="31" fill="#fff" stroke="#fff" stroke-width="0.7" letter-spacing="-0.1">Make</text>
<text x="0" y="0" font-family="Liberation Sans" font-size="31" fill="#fff" stroke="#222" stroke-width="0.9" transform="translate(152.5,36.5) scale(0.88,1)">Soil</text>
<!-- active item -->
<rect x="0" y="71" width="250" height="47" fill="#454545"/>
<rect x="0" y="71" width="3" height="47" fill="#45b649"/>
<g font-family="Liberation Sans" font-size="16" fill="#e3e3e3" letter-spacing="-0.15">
<text x="55" y="100">Find a Soil Site</text>
<text x="52.5" y="147">Create a Soil Site</text>
<text x="52.5" y="194">Donate</text>
<text x="52.5" y="241">My Soil Sites</text>
<text x="52.5" y="288">Activate Your City</text>
<text x="52.5" y="335">Messages</text>
<text x="52.5" y="382">Learn</text>
<text x="52.5" y="429">Poster &amp; Flyers</text>
<text x="52.5" y="476">DIY</text>
</g>
<g fill="#e0e0e0">
<!-- map icon -->
<path d="M24,91 L29,89.5 L29,101 L24,101.5 Z"/>
<path d="M30,93 L33,96 L36,93 L36,101 L30,99.5 Z"/>
<path d="M37,89.5 L42,89 L42,100 L37,101.5 Z"/>
<path d="M33,96 L29.5,90.5 A4,4 0 1 1 36.5,90.5 Z"/>
<circle cx="33" cy="88.6" r="1.3" fill="#454545"/>
<!-- leaf -->
<path d="M22.5,146 C24,141 26,139.5 28,139 C31,138.5 32,138 28,137.5 C25,137.5 24.5,139 24,139.5 C26,134 32,133 38,132.8 C38.5,140 35,146 28.5,145 C27,144.8 26,142 23.8,146.5 Z"/>
<!-- heart -->
<path d="M30,193.9 L23.5,187.5 C21.3,185.2 22,180.5 26,180.2 C28,180 29.3,181.3 30,182.3 C30.7,181.3 32,180 34,180.2 C38,180.5 38.7,185.2 36.5,187.5 Z"/>
<!-- pin -->
<path d="M30,241.8 C28,238 24,234 24,231.8 A6,6 0 0 1 36,231.8 C36,234 32,238 30,241.8 Z M28.2,230 L28.2,233.6 L31.8,233.6 L31.8,230 Z" fill-rule="evenodd"/>
<!-- chart -->
<path d="M22,273.7 V286.5 A1.4,1.4 0 0 0 23.4,287.9 H38" fill="none" stroke="#e0e0e0" stroke-width="2"/>
<path d="M25.4,282 L29.5,278 L32,280.5 L36.5,276" fill="none" stroke="#e0e0e0" stroke-width="2" stroke-linecap="round" stroke-linejoin="round"/>
<!-- envelope -->
<path d="M22.5,321.8 H37.4 A0.6,0.6 0 0 1 38,322.4 V324 L30,329.5 L22,324 V322.4 A0.6,0.6 0 0 1 22.5,321.8 Z"/>
<path d="M22,325.8 L30,331.3 L38,325.8 V333.4 A0.6,0.6 0 0 1 37.4,334 H22.6 A0.6,0.6 0 0 1 22,333.4 Z"/>
<!-- cap -->
<path d="M19.9,372 L30,367.7 L40.2,371.8 L30,375.8 Z"/>
<path d="M24,374.5 L30,377 L36,374.5 V379.6 C36,381 33,381.9 30,381.9 C27,381.9 24,381 24,379.6 Z"/>
<path d="M21,372.5 L23,372.5 L22.8,381.5 L20,381.5 Z"/>
<!-- file -->
<path d="M24.3,413.7 H31.8 V418.6 H36.2 V429.4 A0.6,0.6 0 0 1 35.6,430 H24.4 A0.6,0.6 0 0 1 23.8,429.4 V414.2 Z M32.7,413.8 L36.2,417.6 H32.7 Z M26,417.5 H29 V418.6 H26 Z M26,419.5 H29 V420.6 H26 Z M26,421.8 V425.6 H34 V421.8 Z M31,426.7 H34 V427.8 H31 Z" fill-rule="evenodd"/>
<path d="M27,422.8 H33 V424.6 H27 Z"/>
<!-- archive -->
<rect x="22" y="461.7" width="16" height="3.1" rx="0.5"/>
<path d="M23,466.1 H37.1 V475.3 A0.6,0.6 0 0 1 36.5,475.9 H23.6 A0.6,0.6 0 0 1 23,475.3 Z M27.3,468 H32.6 A0.6,0.6 0 0 1 32.6,469.2 H27.3 A0.6,0.6 0 0 1 27.3,468 Z" fill-rule="evenodd"/>
</g>
<!-- search box contents -->
<text x="282.3" y="100.6" font-family="Liberation Sans" font-size="15" fill="#757575">Find a soil site near you</text>
<g fill="none" stroke="#4aa84e" stroke-width="2">
<circle cx="516.3" cy="93.8" r="5.5"/><path d="M520.3,97.8 L525.3,102.6" stroke-linecap="round"/>
<circle cx="556.8" cy="94.9" r="5.8" stroke-width="1.8"/>
<path d="M556.8,87.2 V91.3 M556.8,98.5 V102.6 M549.1,94.9 H553.2 M560.4,94.9 H564.5" stroke-width="2.2"/>
</g>
<circle cx="556.8" cy="94.9" r="1.1" fill="#4aa84e"/>
<rect x="536" y="81" width="1" height="28" fill="#cfcfcf"/>
<!-- toggle chevron -->
<path d="M267,193.5 L277,203 L267,212.5" fill="none" stroke="#fff" stroke-width="2.8" stroke-linecap="round" stroke-linejoin="round"/>
</svg>
</body></html>
